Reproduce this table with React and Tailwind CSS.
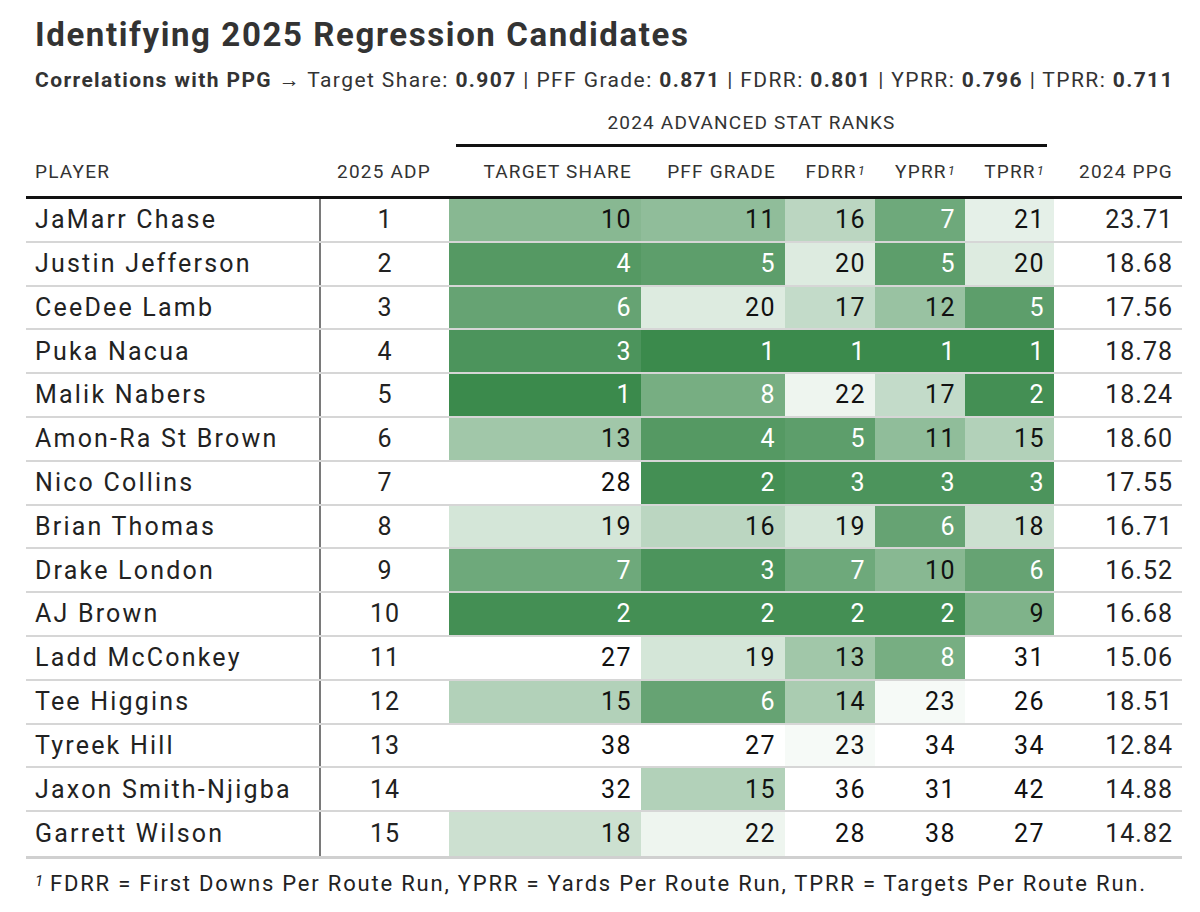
import React from 'react';

const rows = [
  ['JaMarr Chase', 1, [10, 11, 16, 7, 21], '23.71'],
  ['Justin Jefferson', 2, [4, 5, 20, 5, 20], '18.68'],
  ['CeeDee Lamb', 3, [6, 20, 17, 12, 5], '17.56'],
  ['Puka Nacua', 4, [3, 1, 1, 1, 1], '18.78'],
  ['Malik Nabers', 5, [1, 8, 22, 17, 2], '18.24'],
  ['Amon-Ra St Brown', 6, [13, 4, 5, 11, 15], '18.60'],
  ['Nico Collins', 7, [28, 2, 3, 3, 3], '17.55'],
  ['Brian Thomas', 8, [19, 16, 19, 6, 18], '16.71'],
  ['Drake London', 9, [7, 3, 7, 10, 6], '16.52'],
  ['AJ Brown', 10, [2, 2, 2, 2, 9], '16.68'],
  ['Ladd McConkey', 11, [27, 19, 13, 8, 31], '15.06'],
  ['Tee Higgins', 12, [15, 6, 14, 23, 26], '18.51'],
  ['Tyreek Hill', 13, [38, 27, 23, 34, 34], '12.84'],
  ['Jaxon Smith-Njigba', 14, [32, 15, 36, 31, 42], '14.88'],
  ['Garrett Wilson', 15, [18, 22, 28, 38, 27], '14.82'],
];

// widths of the five rank columns
const rankCols = ['w-[192px]', 'w-[144px]', 'w-[90px]', 'w-[90px]', 'w-[89px]'];

function rankColor(rank) {
  const t = Math.min((rank - 1) / 23, 1);
  const dark = [59, 138, 76];
  const mix = dark.map((c) => Math.round(c + (255 - c) * t));
  return `rgb(${mix[0]}, ${mix[1]}, ${mix[2]})`;
}

function Sup() {
  return <sup className="italic text-[13px] ml-[1px] relative -top-[3px]">1</sup>;
}

export default function App() {
  return (
    <div className="w-[1200px] h-[912px] bg-white text-[#2b2b2b] font-['Roboto',sans-serif]">
      <div className="pt-[14px] pl-[35px]">
        <h1 className="text-[33px] leading-[42px] font-bold text-[#333] tracking-[1.6px]">
          Identifying 2025 Regression Candidates
        </h1>
        <p className="mt-[10px] text-[21px] leading-[28px] text-[#333] tracking-[1.4px] whitespace-nowrap">
          <b>Correlations with PPG</b> → Target Share: <b>0.907</b> | PFF Grade: <b>0.871</b> | FDRR:{' '}
          <b>0.801</b> | YPRR: <b>0.796</b> | TPRR: <b>0.711</b>
        </p>
      </div>

      <div className="ml-[26px] w-[1156px] mt-[16px]">
        {/* spanner */}
        <div className="flex h-[37px]">
          <div className="w-[430px]" />
          <div className="w-[591px] border-b-[3px] border-[#111] flex justify-center items-start">
            <span className="text-[19px] leading-[26px] text-[#333] tracking-[1.2px]">2024 ADVANCED STAT RANKS</span>
          </div>
        </div>

        {/* header */}
        <div className="flex items-center h-[52px] pt-[2px] border-b-[3px] border-[#111] text-[19px] text-[#333] tracking-[1.2px]">
          <div className="w-[293px] pl-[9px]">PLAYER</div>
          <div className="w-[130px] text-center">2025 ADP</div>
          <div className="w-[192px] text-right pr-[9px]">TARGET SHARE</div>
          <div className="w-[144px] text-right pr-[9px]">PFF GRADE</div>
          <div className="w-[90px] text-right pr-[9px]">FDRR<Sup /></div>
          <div className="w-[90px] text-right pr-[9px]">YPRR<Sup /></div>
          <div className="w-[89px] text-right pr-[9px]">TPRR<Sup /></div>
          <div className="w-[128px] text-right pr-[9px]">2024 PPG</div>
        </div>

        {/* body */}
        <div className="border-b-[3px] border-[#d0d0d0]">
          {rows.map(([name, adp, ranks, ppg], i) => (
            <div
              key={name}
              className={`flex h-[43.8px] text-[25px] ${i < rows.length - 1 ? 'border-b-2 border-[#d6d6d6]' : ''}`}
            >
              <div className="w-[293px] pl-[9px] flex items-center text-[#222] tracking-[2.2px]">{name}</div>
              <div className="w-[2px] bg-[#7a7a7a]" />
              <div className="w-[128px] flex items-center justify-center text-[#222] tracking-[1px]">{adp}</div>
              {ranks.map((r, j) => (
                <div
                  key={j}
                  className={`${rankCols[j]} flex items-center justify-end pr-[9px] tracking-[1.5px] ${r <= 8 ? 'text-white' : 'text-[#111]'}`}
                  style={{ backgroundColor: rankColor(r) }}
                >
                  {r}
                </div>
              ))}
              <div className="w-[128px] flex items-center justify-end pr-[9px] text-[#222] tracking-[1px]">{ppg}</div>
            </div>
          ))}
        </div>
      </div>

      <p className="pl-[35px] mt-[11px] text-[22px] leading-[28px] text-[#222] tracking-[1.8px] whitespace-nowrap">
        <sup className="italic text-[15px] relative -top-[5px] mr-[5px]">1</sup>
        FDRR = First Downs Per Route Run, YPRR = Yards Per Route Run, TPRR = Targets Per Route Run.
      </p>
    </div>
  );
}
